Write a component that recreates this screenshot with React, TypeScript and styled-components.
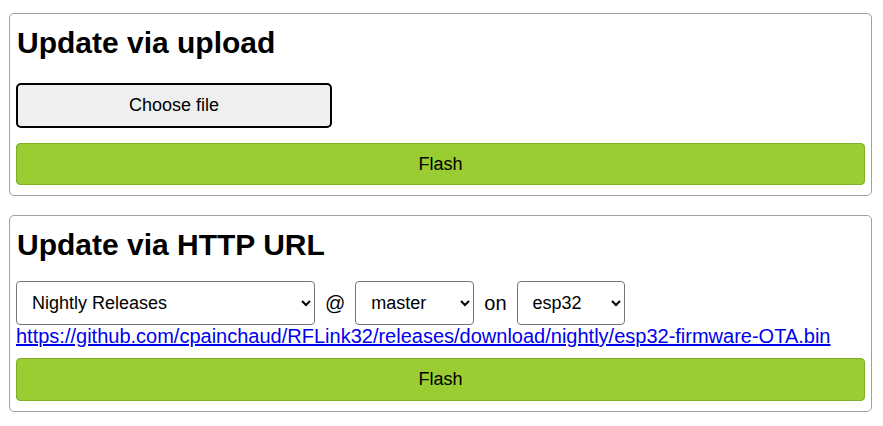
import React from "react";
import styled, { createGlobalStyle } from "styled-components";

const GlobalStyle = createGlobalStyle`
  html, body {
    margin: 0;
    padding: 0;
    background: #ffffff;
  }
  body {
    font-family: "Liberation Sans", Arial, sans-serif;
    font-size: 20px;
    color: #000000;
  }
`;

const Page = styled.div`
  display: flex;
  flex-direction: column;
  gap: 19px;
  padding: 13px 11px 0 9px;
`;

const Panel = styled.section`
  display: flex;
  flex-direction: column;
  border: 1px solid #a0a0a0;
  border-radius: 5px;
  padding: 12px 6px 10px 6px;
`;

const Heading = styled.h2`
  margin: 0 0 19px 1px;
  font-size: 30px;
  line-height: 34px;
  font-weight: bold;
`;

const FileButton = styled.button`
  width: 316px;
  height: 45px;
  margin: 4px 0 15px 0;
  border: 2px solid #000000;
  border-radius: 5px;
  background: #efefef;
  color: #000000;
  font-family: inherit;
  font-size: 18px;
  padding: 0;
  cursor: pointer;
`;

const FlashButton = styled.button<{ $height: number }>`
  width: 100%;
  height: ${(p) => p.$height}px;
  border: 1px solid #82ad27;
  border-radius: 4px;
  background: #9acd32;
  color: #000000;
  font-family: inherit;
  font-size: 18px;
  padding: 0;
  cursor: pointer;
`;

const SourceRow = styled.div`
  display: flex;
  align-items: center;
  gap: 10px;
  height: 44px;
`;

const Select = styled.select<{ $width: number }>`
  width: ${(p) => p.$width}px;
  height: 44px;
  border: 1px solid #767676;
  border-radius: 4px;
  background: #ffffff;
  color: #000000;
  font-family: inherit;
  font-size: 18px;
  padding: 0 8px 0 11px;
`;

const Joiner = styled.span`
  font-size: 20px;
`;

const UrlLink = styled.a`
  display: block;
  color: #0000ee;
  text-decoration: underline;
  font-size: 20px;
  line-height: 23px;
  margin-bottom: 10px;
`;

export default function App() {
  return (
    <>
      <GlobalStyle />
      <Page>
        <Panel>
          <Heading>Update via upload</Heading>
          <FileButton type="button">Choose file</FileButton>
          <FlashButton type="button" $height={42}>
            Flash
          </FlashButton>
        </Panel>
        <Panel>
          <Heading>Update via HTTP URL</Heading>
          <SourceRow>
            <Select $width={299} defaultValue="nightly">
              <option value="nightly">Nightly Releases</option>
              <option value="stable">Stable Releases</option>
            </Select>
            <Joiner>@</Joiner>
            <Select $width={119} defaultValue="master">
              <option value="master">master</option>
            </Select>
            <Joiner>on</Joiner>
            <Select $width={108} defaultValue="esp32">
              <option value="esp32">esp32</option>
              <option value="esp8266">esp8266</option>
            </Select>
          </SourceRow>
          <UrlLink href="https://github.com/cpainchaud/RFLink32/releases/download/nightly/esp32-firmware-OTA.bin">
            https://github.com/cpainchaud/RFLink32/releases/download/nightly/esp32-firmware-OTA.bin
          </UrlLink>
          <FlashButton type="button" $height={43}>
            Flash
          </FlashButton>
        </Panel>
      </Page>
    </>
  );
}
